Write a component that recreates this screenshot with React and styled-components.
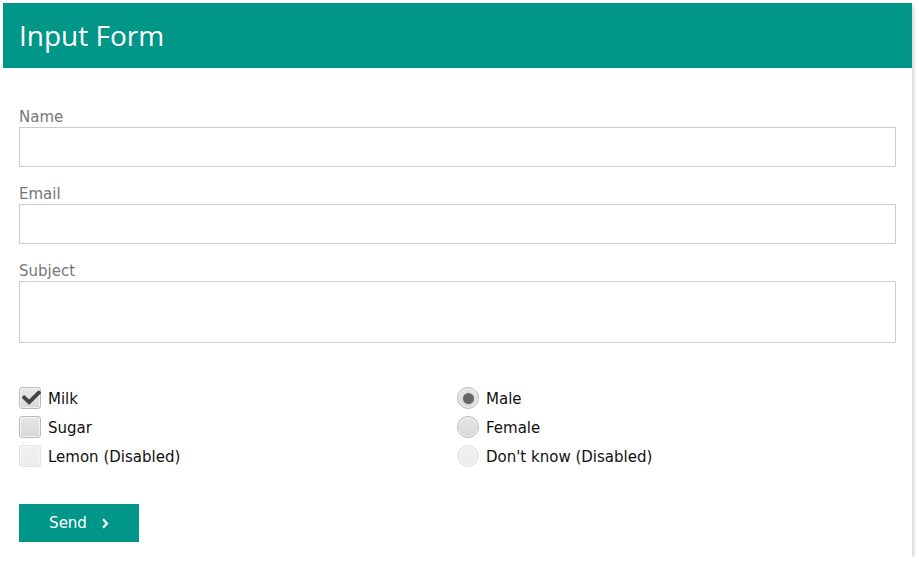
import React from "react";
import styled, { createGlobalStyle } from "styled-components";
import { FaCheck } from "react-icons/fa";

const GlobalStyle = createGlobalStyle`
  body {
    margin: 3px;
    background: #fff;
    font-family: "DejaVu Sans", Verdana, sans-serif;
  }
`;

const Card = styled.div`
  width: 909px;
  background: #fff;
  box-shadow: 0 3px 7px rgba(0, 0, 0, 0.3);
`;

const Header = styled.div`
  height: 65px;
  background: #009688;
  display: flex;
  align-items: center;
  padding: 0 16px;
  box-sizing: border-box;

  h1 {
    margin: 0;
    font-family: "Open Sans", "Noto Sans", sans-serif;
    font-weight: 400;
    font-size: 28px;
    color: #fff;
    padding-bottom: 1px;
  }
`;

const Form = styled.form`
  padding: 40px 16px 15px;
`;

const Field = styled.div`
  margin-bottom: 18px;
`;

const Label = styled.label`
  display: block;
  font-size: 15px;
  line-height: 18px;
  color: #777;
  margin-bottom: 1px;
`;

const TextInput = styled.input`
  display: block;
  width: 100%;
  height: ${(p) => p.$h || 40}px;
  box-sizing: border-box;
  border: 1px solid #ccc;
  outline: none;
  font: inherit;
  padding: 4px 8px;
  margin: 0;
  resize: none;
`;

const Options = styled.div`
  display: grid;
  grid-template-columns: 438px 1fr;
  margin-top: 44px;
`;

const Column = styled.div`
  display: flex;
  flex-direction: column;
  gap: 7px;
`;

const Option = styled.div`
  display: flex;
  align-items: center;
  gap: 7px;
  font-size: 15px;
  line-height: 18px;
  color: #111;
  height: 22px;
`;

const OptionText = styled.span`
  padding-top: 2px;
`;

const Box = styled.span`
  position: relative;
  width: 22px;
  height: 22px;
  box-sizing: border-box;
  border: 1px solid ${(p) => (p.$disabled ? "#e2e2e2" : "#bbb")};
  border-radius: ${(p) => (p.$round ? "50%" : "3px")};
  background: ${(p) =>
    p.$disabled
      ? "linear-gradient(#f2f2f2, #ececec)"
      : "linear-gradient(#e6e6e6, #d8d8d8)"};
  box-shadow: inset 0 0 0 1px rgba(255, 255, 255, ${(p) => (p.$disabled ? 0.3 : 0.6)});
  display: flex;
  align-items: center;
  justify-content: center;
  flex-shrink: 0;

  svg {
    position: absolute;
    left: 2px;
    top: 0px;
  }
`;

const Dot = styled.span`
  width: 11px;
  height: 11px;
  border-radius: 50%;
  background: #666;
`;

const Button = styled.button`
  margin-top: 37px;
  width: 120px;
  height: 38px;
  border: none;
  background: #009688;
  color: #fff;
  font-family: "DejaVu Sans", Verdana, sans-serif;
  font-size: 15px;
  display: flex;
  align-items: center;
  justify-content: center;
  gap: 14px;
  padding: 0;
`;

const Chevron = () => (
  <svg width="8" height="11" viewBox="0 0 8 11">
    <path d="M2 1.2 L6 5.5 L2 9.8" fill="none" stroke="#fff" strokeWidth="2.2" />
  </svg>
);

const App = () => {
  return (
    <>
      <GlobalStyle />
      <Card>
        <Header>
          <h1>Input Form</h1>
        </Header>
        <Form onSubmit={(e) => e.preventDefault()}>
          <Field>
            <Label>Name</Label>
            <TextInput />
          </Field>
          <Field>
            <Label>Email</Label>
            <TextInput />
          </Field>
          <Field>
            <Label>Subject</Label>
            <TextInput as="textarea" $h={62} />
          </Field>
          <Options>
            <Column>
              <Option>
                <Box>
                  <FaCheck size={19} color="#444" />
                </Box>
                <OptionText>Milk</OptionText>
              </Option>
              <Option>
                <Box />
                <OptionText>Sugar</OptionText>
              </Option>
              <Option>
                <Box $disabled />
                <OptionText>Lemon (Disabled)</OptionText>
              </Option>
            </Column>
            <Column>
              <Option>
                <Box $round><Dot /></Box>
                <OptionText>Male</OptionText>
              </Option>
              <Option>
                <Box $round />
                <OptionText>Female</OptionText>
              </Option>
              <Option>
                <Box $round $disabled />
                <OptionText>Don't know (Disabled)</OptionText>
              </Option>
            </Column>
          </Options>
          <Button type="submit">
            Send <Chevron />
          </Button>
        </Form>
      </Card>
    </>
  );
};

export default App;
